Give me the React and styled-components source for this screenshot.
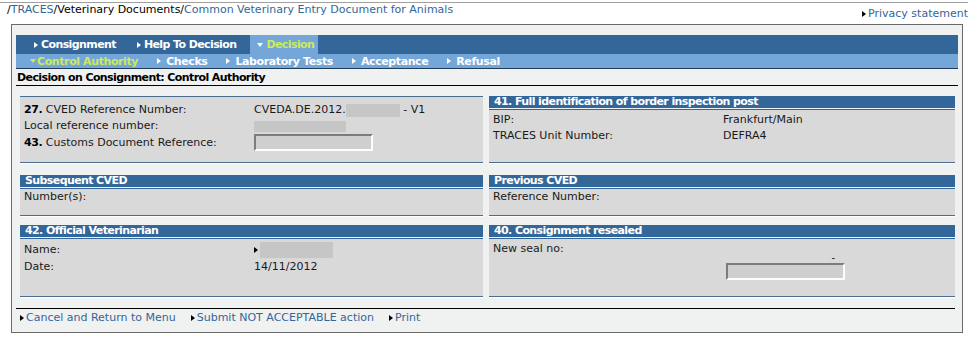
import React from "react";
import styled, { createGlobalStyle } from "styled-components";

const GlobalStyle = createGlobalStyle`
  body {
    margin: 0;
    background: #fff;
  }
`;

const Page = styled.div`
  width: 971px;
  height: 337px;
  overflow: hidden;
  font-family: "DejaVu Sans", Verdana, sans-serif;
  font-size: 11px;
  color: #1a1a1a;
`;

const TopBar = styled.div`
  margin-top: 2px;
  width: 968px;
  height: 21px;
  border-top: 1px solid #a0a0a0;
  display: flex;
  justify-content: space-between;
  align-items: flex-start;
`;

const Crumbs = styled.div`
  padding-left: 7px;
  line-height: 13px;
  color: #000;
`;

const Link = styled.span`
  color: #336699;
`;

const Privacy = styled.div`
  margin-top: 4px;
  line-height: 13px;
  display: flex;
  align-items: center;
`;

const Arrow = styled.span`
  display: inline-block;
  width: 0;
  height: 0;
  border-left: 4px solid ${(p) => p.$color || "#000"};
  border-top: 3px solid transparent;
  border-bottom: 3px solid transparent;
  margin-right: ${(p) => p.$gap || 2}px;
`;

const DownArrow = styled.span`
  display: inline-block;
  width: 0;
  height: 0;
  border-top: 4px solid ${(p) => p.$color};
  border-left: 3px solid transparent;
  border-right: 3px solid transparent;
  margin-right: ${(p) => p.$gap || 3}px;
`;

const Frame = styled.div`
  margin-left: 11px;
  width: 952px;
  height: 309px;
  box-sizing: border-box;
  border: 1px solid #6a6a6a;
  background: #f0f1f1;
  padding: 10px 4px 0;
`;

const MainNav = styled.div`
  height: 19px;
  background: #336699;
  display: flex;
  padding-left: 11px;
  gap: 7px;
`;

const SubNav = styled.div`
  height: 14px;
  background: #74a6d8;
  border-bottom: 1px solid #1f3c5c;
  display: flex;
  padding-left: 12px;
`;

const NavItem = styled.div`
  display: flex;
  align-items: center;
  padding: 0 ${(p) => (p.$active ? "4px 0 7px" : "7px")};
  font-weight: bold;
  letter-spacing: -0.6px;
  color: ${(p) => (p.$active ? "#cdea5c" : "#fff")};
  background: ${(p) => (p.$active ? "#74a6d8" : "transparent")};
  white-space: nowrap;
`;

const SubItem = styled.div`
  display: flex;
  align-items: center;
  padding: 0 2px;
  margin-right: 15px;
  font-weight: bold;
  letter-spacing: -0.4px;
  color: ${(p) => (p.$active ? "#cdea5c" : "#fff")};
  white-space: nowrap;
`;

const Title = styled.div`
  height: 14px;
  padding-top: 2px;
  line-height: 14px;
  padding-left: 1px;
  font-weight: bold;
  letter-spacing: -0.6px;
  color: #000;
  border-bottom: 1px solid #000;
`;

const PanelRow = styled.div`
  display: grid;
  grid-template-columns: 463px 466px;
  column-gap: 6px;
  margin-top: ${(p) => p.$top}px;
  padding: 0 3px 0 4px;
`;

const Panel = styled.div`
  background: #d9d9d9;
  border-top: ${(p) => (p.$lined ? "1px solid #4d6d8d" : "none")};
  border-bottom: 1px solid #4d6d8d;
  box-shadow: 0 1px 0 #fff;
`;

const PanelHead = styled.div`
  height: 12px;
  line-height: 12px;
  padding-left: 5px;
  background: #336699;
  color: #fff;
  font-weight: bold;
  letter-spacing: -0.6px;
  box-shadow: 0 1px 0 #eef3f8, 0 2px 0 #336699;
  margin-bottom: 2px;
`;

const PanelBody = styled.div`
  padding: ${(p) => p.$pt ?? 2}px 4px ${(p) => p.$pb ?? 8}px 4px;
`;

const Field = styled.div`
  display: grid;
  grid-template-columns: 230px 1fr;
  line-height: 16px;
  min-height: ${(p) => p.$h || 16}px;
  align-items: ${(p) => (p.$top ? "start" : "center")};
`;

const Num = styled.b`
  color: #000;
  letter-spacing: -0.4px;
`;

const Value = styled.div`
  display: flex;
  align-items: center;
`;

const Blur = styled.span`
  display: inline-block;
  width: ${(p) => p.$w}px;
  height: ${(p) => p.$h}px;
  background: #c6c6c6;
  border-radius: 1px;
`;

const Input = styled.div`
  width: 119px;
  height: 17px;
  box-sizing: border-box;
  border-style: solid;
  border-width: 2px;
  border-color: #7c7c7c #fdfdfd #fdfdfd #7c7c7c;
  background: #cfcfcf;
  margin-left: ${(p) => p.$left || 0}px;
`;

const SealCell = styled.div`
  padding-top: 12px;
`;

const Dash = styled.div`
  width: 112px;
  text-align: right;
  line-height: 10px;
  height: 10px;
  font-size: 10px;
`;

const Footer = styled.div`
  margin: 11px 3px 0 0;
  border-top: 1px solid #000;
  display: flex;
  padding-left: 4px;
  line-height: 18px;
`;

const FootLink = styled.div`
  display: flex;
  align-items: center;
  margin-right: 15px;
  color: #336699;
`;

export default function App() {
  return (
    <Page>
      <GlobalStyle />
      <TopBar>
        <Crumbs>
          /<Link>TRACES</Link>/Veterinary Documents/
          <Link>Common Veterinary Entry Document for Animals</Link>
        </Crumbs>
        <Privacy>
          <Arrow />
          <Link>Privacy statement</Link>
        </Privacy>
      </TopBar>

      <Frame>
        <MainNav>
          <NavItem>
            <Arrow $color="#fff" $gap={3} />
            Consignment
          </NavItem>
          <NavItem>
            <Arrow $color="#fff" $gap={3} />
            Help To Decision
          </NavItem>
          <NavItem $active>
            <DownArrow $color="#fff" />
            Decision
          </NavItem>
        </MainNav>
        <SubNav>
          <SubItem $active>
            <DownArrow $color="#cdea5c" $gap={1} />
            Control Authority
          </SubItem>
          <SubItem>
            <Arrow $color="#fff" $gap={5} />
            Checks
          </SubItem>
          <SubItem>
            <Arrow $color="#fff" $gap={5} />
            Laboratory Tests
          </SubItem>
          <SubItem>
            <Arrow $color="#fff" $gap={5} />
            Acceptance
          </SubItem>
          <SubItem>
            <Arrow $color="#fff" $gap={5} />
            Refusal
          </SubItem>
        </SubNav>
        <Title>Decision on Consignment: Control Authority</Title>

        <PanelRow $top={10}>
          <Panel $lined>
            <PanelBody $pt={5} $pb={11}>
              <Field>
                <span>
                  <Num>27.</Num> CVED Reference Number:
                </span>
                <Value>
                  CVEDA.DE.2012.
                  <Blur $w={54} $h={13} />
                  &nbsp;- V1
                </Value>
              </Field>
              <Field>
                <span>Local reference number:</span>
                <Value>
                  <Blur $w={92} $h={11} />
                </Value>
              </Field>
              <Field $h={17}>
                <span>
                  <Num>43.</Num> Customs Document Reference:
                </span>
                <Value>
                  <Input />
                </Value>
              </Field>
            </PanelBody>
          </Panel>
          <Panel>
            <PanelHead>41. Full identification of border inspection post</PanelHead>
            <PanelBody>
              <Field>
                <span>BIP:</span>
                <span>Frankfurt/Main</span>
              </Field>
              <Field>
                <span>TRACES Unit Number:</span>
                <span>DEFRA4</span>
              </Field>
            </PanelBody>
          </Panel>
        </PanelRow>

        <PanelRow $top={12}>
          <Panel>
            <PanelHead>Subsequent CVED</PanelHead>
            <PanelBody $pt={0} $pb={10}>
              <Field>
                <span>Number(s):</span>
              </Field>
            </PanelBody>
          </Panel>
          <Panel>
            <PanelHead>Previous CVED</PanelHead>
            <PanelBody $pt={0} $pb={10}>
              <Field>
                <span>Reference Number:</span>
              </Field>
            </PanelBody>
          </Panel>
        </PanelRow>

        <PanelRow $top={9}>
          <Panel>
            <PanelHead>42. Official Veterinarian</PanelHead>
            <PanelBody>
              <Field $h={18}>
                <span>Name:</span>
                <Value>
                  <Arrow $gap={2} />
                  <Blur $w={73} $h={16} />
                </Value>
              </Field>
              <Field>
                <span>Date:</span>
                <span>14/11/2012</span>
              </Field>
            </PanelBody>
          </Panel>
          <Panel>
            <PanelHead>40. Consignment resealed</PanelHead>
            <PanelBody $pb={16}>
              <Field $top>
                <span>New seal no:</span>
                <SealCell>
                  <Dash>-</Dash>
                  <Input $left={3} />
                </SealCell>
              </Field>
            </PanelBody>
          </Panel>
        </PanelRow>

        <Footer>
          <FootLink>
            <Arrow />
            Cancel and Return to Menu
          </FootLink>
          <FootLink>
            <Arrow />
            Submit NOT ACCEPTABLE action
          </FootLink>
          <FootLink>
            <Arrow />
            Print
          </FootLink>
        </Footer>
      </Frame>
    </Page>
  );
}
